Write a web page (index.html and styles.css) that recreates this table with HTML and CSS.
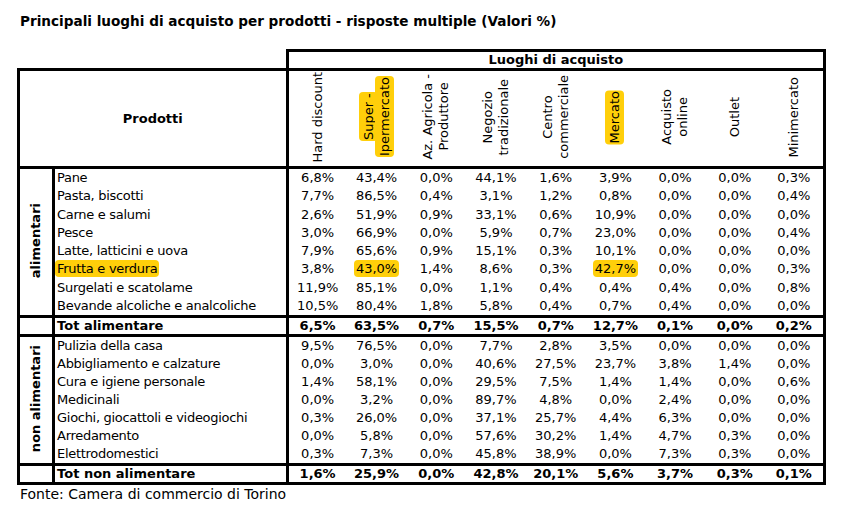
FILE: index.html
```html
<!DOCTYPE html>
<html lang="it">
<head>
<meta charset="utf-8">
<title>Principali luoghi di acquisto</title>
<link rel="stylesheet" href="styles.css">
</head>
<body>
<div class="page">
  <h1 class="title">Principali luoghi di acquisto per prodotti - risposte multiple (Valori %)</h1>
  <table class="grid">
    <colgroup>
      <col class="c-group"><col class="c-prod">
      <col class="c-val"><col class="c-val"><col class="c-val"><col class="c-val"><col class="c-val"><col class="c-val"><col class="c-val"><col class="c-val"><col class="c-val">
    </colgroup>
    <thead>
      <tr class="r-top">
        <th class="blank" colspan="2"></th>
        <th class="luoghi" colspan="9">Luoghi di acquisto</th>
      </tr>
      <tr class="r-head">
        <th class="prodotti" colspan="2">Prodotti</th>
        <th class="vh"><div class="vt">Hard discount</div></th>
        <th class="vh"><div class="vt"><span class="hl">Super -</span><br><span class="hl">Ipermercato</span></div></th>
        <th class="vh"><div class="vt">Az. Agricola -<br>Produttore</div></th>
        <th class="vh"><div class="vt">Negozio<br>tradizionale</div></th>
        <th class="vh"><div class="vt">Centro<br>commerciale</div></th>
        <th class="vh"><div class="vt"><span class="hl">Mercato</span></div></th>
        <th class="vh"><div class="vt">Acquisto<br>online</div></th>
        <th class="vh"><div class="vt">Outlet</div></th>
        <th class="vh vh-last"><div class="vt">Minimercato</div></th>
      </tr>
    </thead>
    <tbody class="g-ali">
      <tr><th class="grp" rowspan="8"><div class="vg">alimentari</div></th><td class="p">Pane</td><td>6,8%</td><td>43,4%</td><td>0,0%</td><td>44,1%</td><td>1,6%</td><td>3,9%</td><td>0,0%</td><td>0,0%</td><td>0,3%</td></tr>
      <tr><td class="p">Pasta, biscotti</td><td>7,7%</td><td>86,5%</td><td>0,4%</td><td>3,1%</td><td>1,2%</td><td>0,8%</td><td>0,0%</td><td>0,0%</td><td>0,4%</td></tr>
      <tr><td class="p">Carne e salumi</td><td>2,6%</td><td>51,9%</td><td>0,9%</td><td>33,1%</td><td>0,6%</td><td>10,9%</td><td>0,0%</td><td>0,0%</td><td>0,0%</td></tr>
      <tr><td class="p">Pesce</td><td>3,0%</td><td>66,9%</td><td>0,0%</td><td>5,9%</td><td>0,7%</td><td>23,0%</td><td>0,0%</td><td>0,0%</td><td>0,4%</td></tr>
      <tr><td class="p">Latte, latticini e uova</td><td>7,9%</td><td>65,6%</td><td>0,9%</td><td>15,1%</td><td>0,3%</td><td>10,1%</td><td>0,0%</td><td>0,0%</td><td>0,0%</td></tr>
      <tr><td class="p"><span class="hl hl-first">Frutta e verdura</span></td><td>3,8%</td><td><span class="hl">43,0%</span></td><td>1,4%</td><td>8,6%</td><td>0,3%</td><td><span class="hl">42,7%</span></td><td>0,0%</td><td>0,0%</td><td>0,3%</td></tr>
      <tr><td class="p">Surgelati e scatolame</td><td>11,9%</td><td>85,1%</td><td>0,0%</td><td>1,1%</td><td>0,4%</td><td>0,4%</td><td>0,4%</td><td>0,0%</td><td>0,8%</td></tr>
      <tr><td class="p">Bevande alcoliche e analcoliche</td><td>10,5%</td><td>80,4%</td><td>1,8%</td><td>5,8%</td><td>0,4%</td><td>0,7%</td><td>0,4%</td><td>0,0%</td><td>0,0%</td></tr>
      <tr class="tot"><td class="grp-empty"></td><td class="p">Tot alimentare</td><td>6,5%</td><td>63,5%</td><td>0,7%</td><td>15,5%</td><td>0,7%</td><td>12,7%</td><td>0,1%</td><td>0,0%</td><td>0,2%</td></tr>
    </tbody>
    <tbody class="g-non">
      <tr><th class="grp" rowspan="7"><div class="vg">non alimentari</div></th><td class="p">Pulizia della casa</td><td>9,5%</td><td>76,5%</td><td>0,0%</td><td>7,7%</td><td>2,8%</td><td>3,5%</td><td>0,0%</td><td>0,0%</td><td>0,0%</td></tr>
      <tr><td class="p">Abbigliamento e calzature</td><td>0,0%</td><td>3,0%</td><td>0,0%</td><td>40,6%</td><td>27,5%</td><td>23,7%</td><td>3,8%</td><td>1,4%</td><td>0,0%</td></tr>
      <tr><td class="p">Cura e igiene personale</td><td>1,4%</td><td>58,1%</td><td>0,0%</td><td>29,5%</td><td>7,5%</td><td>1,4%</td><td>1,4%</td><td>0,0%</td><td>0,6%</td></tr>
      <tr><td class="p">Medicinali</td><td>0,0%</td><td>3,2%</td><td>0,0%</td><td>89,7%</td><td>4,8%</td><td>0,0%</td><td>2,4%</td><td>0,0%</td><td>0,0%</td></tr>
      <tr><td class="p">Giochi, giocattoli e videogiochi</td><td>0,3%</td><td>26,0%</td><td>0,0%</td><td>37,1%</td><td>25,7%</td><td>4,4%</td><td>6,3%</td><td>0,0%</td><td>0,0%</td></tr>
      <tr><td class="p">Arredamento</td><td>0,0%</td><td>5,8%</td><td>0,0%</td><td>57,6%</td><td>30,2%</td><td>1,4%</td><td>4,7%</td><td>0,3%</td><td>0,0%</td></tr>
      <tr><td class="p">Elettrodomestici</td><td>0,3%</td><td>7,3%</td><td>0,0%</td><td>45,8%</td><td>38,9%</td><td>0,0%</td><td>7,3%</td><td>0,3%</td><td>0,0%</td></tr>
      <tr class="tot"><td class="grp-empty"></td><td class="p">Tot non alimentare</td><td>1,6%</td><td>25,9%</td><td>0,0%</td><td>42,8%</td><td>20,1%</td><td>5,6%</td><td>3,7%</td><td>0,3%</td><td>0,1%</td></tr>
    </tbody>
  </table>
  <p class="source">Fonte: Camera di commercio di Torino</p>
</div>
</body>
</html>
```
FILE: styles.css
```css
html, body {
  margin: 0;
  padding: 0;
  background: #ffffff;
}

th, td {
  padding: 0;
  border: none;
}

.page {
  padding: 13px 0 0 17px;
  font-family: "DejaVu Sans", Verdana, sans-serif;
  color: #000000;
}

.title {
  margin: 0 0 20px 3px;
  font-size: 13.6px;
  line-height: 16px;
  font-weight: bold;
}

.grid {
  border-collapse: collapse;
  table-layout: fixed;
  width: 809px;
  font-size: 13px;
}

.c-group { width: 35px; }
.c-prod { width: 233px; }
.c-val { width: 59.6px; }

.r-top th {
  height: 16px;
  line-height: 16px;
}

.grid .blank {
  border: none;
}

.grid .luoghi {
  border: 3px solid #000;
  font-weight: bold;
  text-align: center;
}

.grid .r-head th {
  height: 95px;
  border-top: 3px solid #000;
  border-bottom: 3px solid #000;
}

.grid .r-head .prodotti {
  border-left: 3px solid #000;
  border-right: 3px solid #000;
  font-weight: bold;
  text-align: center;
  vertical-align: middle;
}

.grid .r-head .vh {
  font-weight: normal;
  text-align: center;
  vertical-align: middle;
}

.grid .r-head .vh-last {
  border-right: 3px solid #000;
}

.vt {
  display: inline-block;
  writing-mode: vertical-rl;
  transform: rotate(180deg);
  text-align: center;
  line-height: 16px;
  white-space: nowrap;
}

.hl {
  background: #ffcf0a;
  border-radius: 4px;
  padding: 1px 2px;
  -webkit-box-decoration-break: clone;
  box-decoration-break: clone;
}

.hl-first {
  margin-left: -2px;
}

.grid .grp {
  border-left: 3px solid #000;
  border-right: 3px solid #000;
  vertical-align: middle;
  text-align: center;
}

.vg {
  display: inline-block;
  writing-mode: vertical-rl;
  transform: rotate(180deg);
  font-weight: bold;
  font-size: 13px;
  line-height: 16px;
  white-space: nowrap;
}

.g-ali td {
  height: 18.25px;
  line-height: 16px;
}

.g-non td {
  height: 18px;
  line-height: 16px;
}

.grid td {
  text-align: center;
  white-space: nowrap;
}

.grid td:last-child {
  border-right: 3px solid #000;
}

.grid td.p {
  text-align: left;
  padding-left: 2px;
  letter-spacing: -0.3px;
  border-left: 3px solid #000;
  border-right: 3px solid #000;
}

.grid tr.tot td {
  height: 16px;
  font-weight: bold;
  border-top: 3px solid #000;
  border-bottom: 3px solid #000;
}

.grid tr.tot td.p {
  letter-spacing: 0;
}

.grid td.grp-empty {
  border-left: 3px solid #000;
  border-right: 3px solid #000;
}

.source {
  margin: 0 0 0 3px;
  font-size: 14px;
  line-height: 18px;
}
```
